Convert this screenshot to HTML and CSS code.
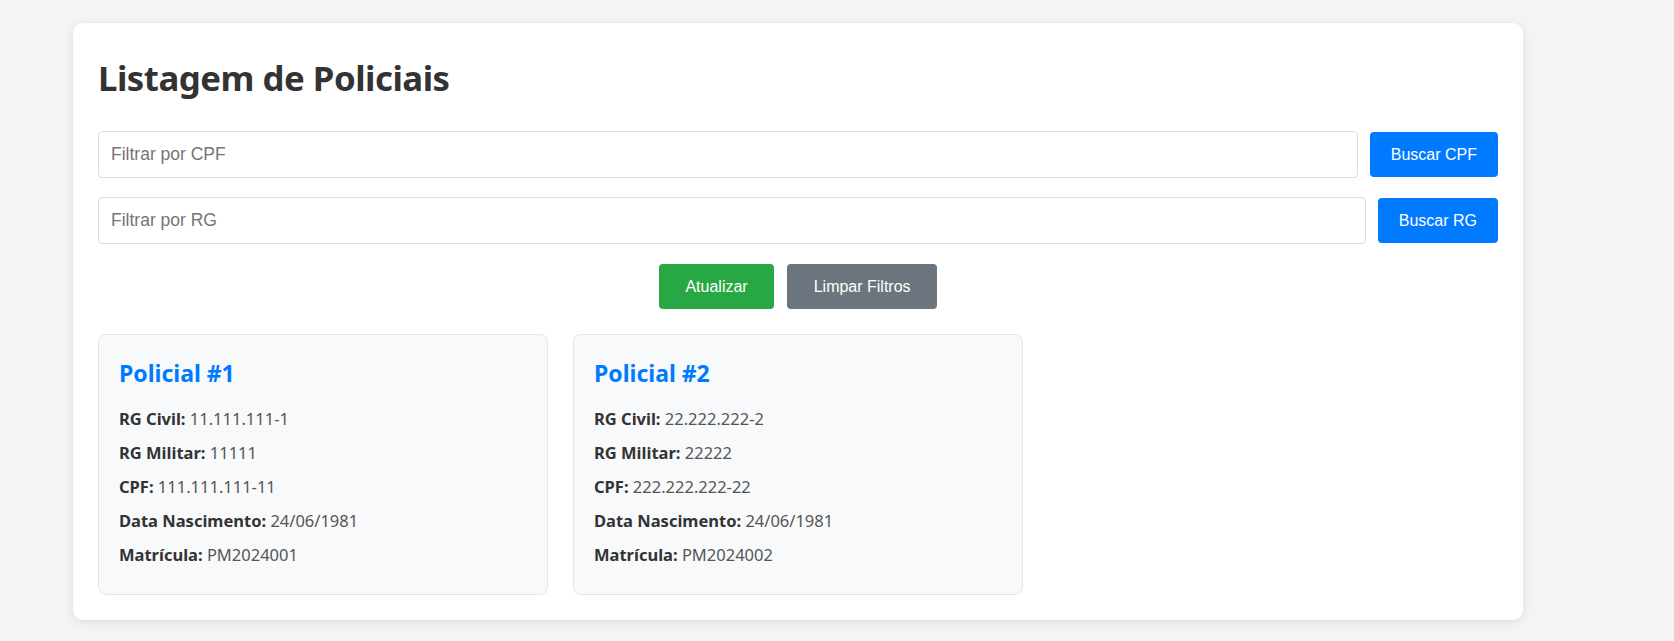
FILE: index.html
```html
<!DOCTYPE html>
<html lang="pt-BR">
<head>
<meta charset="utf-8">
<title>Listagem de Policiais</title>
<link rel="stylesheet" href="styles.css">
</head>
<body>
<main class="container">
  <h1 class="page-title">Listagem de Policiais</h1>
  <div class="filter-row">
    <input class="filter-input" type="text" placeholder="Filtrar por CPF">
    <button class="btn btn-primary">Buscar CPF</button>
  </div>
  <div class="filter-row">
    <input class="filter-input" type="text" placeholder="Filtrar por RG">
    <button class="btn btn-primary">Buscar RG</button>
  </div>
  <div class="actions">
    <button class="btn btn-action btn-success">Atualizar</button>
    <button class="btn btn-action btn-secondary">Limpar Filtros</button>
  </div>
  <div class="cards">
    <article class="card">
      <h3 class="card-title">Policial #1</h3>
      <p class="card-line"><strong>RG Civil:</strong> 11.111.111-1</p>
      <p class="card-line"><strong>RG Militar:</strong> 11111</p>
      <p class="card-line"><strong>CPF:</strong> 111.111.111-11</p>
      <p class="card-line"><strong>Data Nascimento:</strong> 24/06/1981</p>
      <p class="card-line"><strong>Matrícula:</strong> PM2024001</p>
    </article>
    <article class="card">
      <h3 class="card-title">Policial #2</h3>
      <p class="card-line"><strong>RG Civil:</strong> 22.222.222-2</p>
      <p class="card-line"><strong>RG Militar:</strong> 22222</p>
      <p class="card-line"><strong>CPF:</strong> 222.222.222-22</p>
      <p class="card-line"><strong>Data Nascimento:</strong> 24/06/1981</p>
      <p class="card-line"><strong>Matrícula:</strong> PM2024002</p>
    </article>
  </div>
</main>
</body>
</html>
```

FILE: styles.css
```css
* { box-sizing: border-box; }

body {
  margin: 0;
  background: #f4f4f4;
  font-family: "Noto Sans", "Open Sans", sans-serif;
  color: #333;
}

.container {
  width: 1450px;
  margin: 23px 0 20px 73px;
  padding: 25px;
  background: #fff;
  border-radius: 10px;
  box-shadow: 0 2px 10px rgba(0, 0, 0, 0.1);
}

.page-title {
  margin: 7px 0 31px;
  font-size: 34.8px;
  line-height: 45px;
  letter-spacing: -0.5px;
  font-weight: 700;
  color: #333;
}

.filter-row {
  display: flex;
  align-items: center;
  gap: 12px;
  margin-bottom: 19px;
}

.filter-input {
  flex: 1;
  height: 47px;
  padding: 0 12px;
  border: 1px solid #ddd;
  border-radius: 4px;
  font-family: "Liberation Sans", Arial, sans-serif;
  font-size: 17.5px;
  color: #333;
  background: #fff;
}
.filter-input::placeholder { color: #757575; }

.btn {
  border: none;
  border-radius: 4px;
  color: #fff;
  font-family: "Liberation Sans", Arial, sans-serif;
  font-size: 16px;
  line-height: 19px;
  padding: 13px 21px;
  cursor: pointer;
}

.btn-primary { background: #007bff; }
.btn-success { background: #28a745; }
.btn-secondary { background: #6c757d; }
.btn-action { padding: 13px 26.5px; }

.actions {
  display: flex;
  justify-content: center;
  gap: 13px;
  margin-top: 20px;
  margin-bottom: 25px;
}

.cards {
  display: grid;
  grid-template-columns: repeat(3, 1fr);
  gap: 25px;
}

.card {
  background: #f8f9fa;
  border: 1px solid #e3e6ea;
  border-radius: 8px;
  padding: 22px 20px 17px;
}

.card-title {
  margin: 0 0 18px;
  font-size: 23px;
  line-height: 32px;
  font-weight: 700;
  color: #007bff;
}

.card-line {
  margin: 10px 0;
  font-size: 16.5px;
  line-height: 24px;
  color: #555;
}
.card-line strong { color: #333; }
```
